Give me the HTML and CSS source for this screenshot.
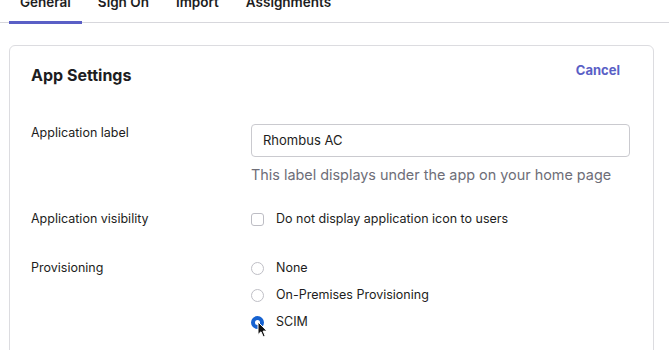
FILE: index.html
```html
<!DOCTYPE html>
<html>
<head>
<meta charset="utf-8">
<link rel="stylesheet" href="styles.css">
</head>
<body>
<nav class="tabs">
  <a class="tab active">General</a>
  <a class="tab">Sign On</a>
  <a class="tab">Import</a>
  <a class="tab">Assignments</a>
</nav>
<section class="card">
  <header class="card-head">
    <h2 class="title">App Settings</h2>
    <a class="cancel">Cancel</a>
  </header>
  <div class="row">
    <div class="label">Application label</div>
    <div class="field">
      <div class="input">Rhombus AC</div>
      <div class="hint">This label displays under the app on your home page</div>
    </div>
  </div>
  <div class="row row-vis">
    <div class="label">Application visibility</div>
    <div class="field">
      <div class="option"><span class="checkbox"></span><span>Do not display application icon to users</span></div>
    </div>
  </div>
  <div class="row row-prov">
    <div class="label">Provisioning</div>
    <div class="field options">
      <div class="option"><span class="radio"></span><span>None</span></div>
      <div class="option"><span class="radio"></span><span>On-Premises Provisioning</span></div>
      <div class="option"><span class="radio checked"><svg class="cursor" width="11" height="17" viewBox="0 0 11 17"><path d="M1 1 L1 13.5 L4 10.8 L6.2 15.8 L8.2 15 L6.1 10.1 L10 10.1 Z" fill="#111" stroke="#fff" stroke-width="1" stroke-linejoin="round"/></svg></span><span>SCIM</span></div>
    </div>
  </div>
</section>
</body>
</html>
```
FILE: styles.css
```css
* { box-sizing: border-box; }
html, body { margin: 0; padding: 0; background: #fff; overflow: hidden; }
body {
  font-family: Inter, "Noto Sans", sans-serif;
  color: #1d1d21;
  width: 669px;
  height: 350px;
}
.tabs {
  display: flex;
  gap: 5px;
  padding-left: 9px;
  margin-top: -8px;
  border-bottom: 1px solid #d7d7dc;
  height: 31px;
}
.tab {
  padding: 0 11px;
  font-size: 13.5px;
  font-weight: 600;
  line-height: 20px;
  height: 32px;
  color: #1d1d21;
}
.tab.active {
  border-bottom: 3px solid #5a5fc6;
}
.card {
  margin: 22px 15px 0 9px;
  border: 1px solid #dcdce0;
  border-radius: 6px;
  padding: 19px 23px 40px 21px;
  height: 340px;
}
.card-head {
  display: flex;
  justify-content: space-between;
  align-items: flex-start;
}
.title {
  margin: 0;
  font-size: 16px;
  font-weight: 700;
  line-height: 20px;
}
.cancel {
  font-size: 13px;
  font-weight: 700;
  color: #5a5fc6;
  line-height: 16px;
  margin-top: -3px;
  margin-right: 10px;
}
.row {
  display: grid;
  grid-template-columns: 220px 1fr;
  margin-top: 39px;
}
.row-vis { margin-top: 25px; }
.row-prov { margin-top: 31px; }
.label {
  font-size: 12.5px;
  line-height: 18px;
  color: #1d1d21;
}
.input {
  height: 33px;
  border: 1px solid #cacacf;
  border-radius: 4px;
  padding: 0 11px;
  font-size: 13px;
  line-height: 31px;
  color: #1d1d21;
}
.hint {
  margin-top: 8px;
  font-size: 14.4px;
  line-height: 20px;
  color: #6e6e78;
}
.options {
  display: flex;
  flex-direction: column;
  gap: 9px;
}
.option {
  display: flex;
  align-items: center;
  gap: 12px;
  font-size: 12.5px;
  line-height: 18px;
  color: #1d1d21;
}
.checkbox {
  width: 13px;
  height: 13px;
  border: 1.5px solid #bdbdc4;
  border-radius: 3px;
  flex: none;
}
.radio {
  position: relative;
  width: 13px;
  height: 13px;
  border: 1.5px solid #bfbfc6;
  border-radius: 50%;
  flex: none;
}
.radio.checked {
  border: 4px solid #1662d0;
  background: #fff;
}
.cursor {
  position: absolute;
  left: 2px;
  top: 1px;
}
```
